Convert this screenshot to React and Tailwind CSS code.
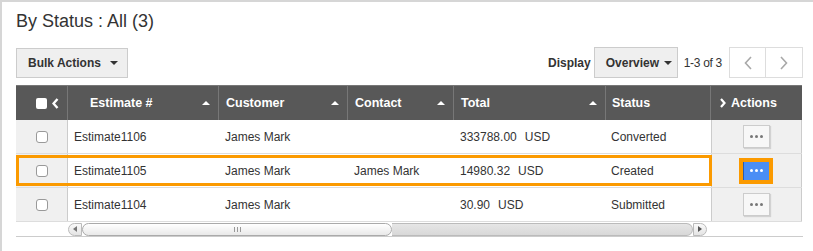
const rows = [
  { id: "Estimate1106", customer: "James Mark", contact: "", total: "333788.00", status: "Converted" },
  { id: "Estimate1105", customer: "James Mark", contact: "James Mark", total: "14980.32", status: "Created", active: true },
  { id: "Estimate1104", customer: "James Mark", contact: "", total: "30.90", status: "Submitted" },
];

function Caret({ className = "" }) {
  return (
    <svg width="8" height="4" viewBox="0 0 8 4" className={className}>
      <polygon points="0,0 8,0 4,4" fill="currentColor" />
    </svg>
  );
}

function SortUp() {
  return (
    <svg width="8" height="4" viewBox="0 0 8 4" className="text-white">
      <polygon points="0,4 8,4 4,0" fill="currentColor" />
    </svg>
  );
}

function HeadCell({ width, label, sort, className = "" }) {
  return (
    <div
      className={`flex items-center justify-between h-full border-r border-[#777] pr-[8px] ${width} ${className}`}
    >
      <span>{label}</span>
      {sort && <SortUp />}
    </div>
  );
}

function Dots({ active }) {
  return (
    <div className={`flex gap-[2px] ${active ? "text-white" : "text-[#777]"}`}>
      <span className="w-[3px] h-[3px] rounded-full bg-current" />
      <span className="w-[3px] h-[3px] rounded-full bg-current" />
      <span className="w-[3px] h-[3px] rounded-full bg-current" />
    </div>
  );
}

export default function App() {
  return (
    <div className="w-[813px] h-[251px] bg-white border-l-2 border-t-2 border-[#d6d6d6] pl-[14px] pr-[10px] pt-[7px] font-['Liberation_Sans',Arial,sans-serif] text-[#333] overflow-hidden">
      <h1 className="text-[18px] leading-[24px] text-[#333]">By Status : All (3)</h1>

      <div className="mt-[14px] flex items-center justify-between h-[31px]">
        <button className="h-[30px] w-[112px] flex items-center gap-[9px] pl-[11px] bg-[#efefef] border border-[#ccc] text-[12px] font-bold text-[#333]">
          Bulk Actions
          <Caret className="text-[#333]" />
        </button>

        <div className="flex items-center h-full">
          <span className="text-[12px] font-bold mr-[3px]">Display</span>
          <button className="h-[31px] w-[84px] flex items-center gap-[5px] pl-[11px] bg-[#efefef] border border-[#ccc] text-[12px] font-bold text-[#333]">
            Overview
            <Caret className="text-[#333]" />
          </button>
          <span className="text-[12px] ml-[6px] mr-[7px] tracking-[-0.3px]">1-3 of 3</span>
          <div className="flex h-[31px] border border-[#ddd] bg-white">
            <div className="w-[36px] flex items-center justify-center border-r border-[#ddd]">
              <svg width="8" height="14" viewBox="0 0 8 14">
                <polyline points="7,1 1.5,7 7,13" fill="none" stroke="#a8a8a8" strokeWidth="1.6" />
              </svg>
            </div>
            <div className="w-[36px] flex items-center justify-center">
              <svg width="8" height="14" viewBox="0 0 8 14">
                <polyline points="1,1 6.5,7 1,13" fill="none" stroke="#a8a8a8" strokeWidth="1.6" />
              </svg>
            </div>
          </div>
        </div>
      </div>

      <div className="mt-[7px] w-[786px]">
        <div className="flex h-[35px] bg-[#585858] border-t border-[#777] text-white text-[12.5px] font-bold">
          <div className="w-[52px] h-full flex items-center justify-end gap-[5px] pr-[8px] border-r border-[#777]">
            <span className="w-[11px] h-[11px] bg-white rounded-[2px]" />
            <svg width="7" height="11" viewBox="0 0 7 11">
              <polyline points="5.5,1 1.5,5.5 5.5,10" fill="none" stroke="white" strokeWidth="2.4" />
            </svg>
          </div>
          <HeadCell width="w-[151px]" label="Estimate #" sort className="pl-[22px]" />
          <HeadCell width="w-[129px]" label="Customer" sort className="pl-[7px]" />
          <HeadCell width="w-[106px]" label="Contact" sort className="pl-[7px]" />
          <HeadCell width="w-[152px]" label="Total" sort className="pl-[7px]" />
          <HeadCell width="w-[105px]" label="Status" className="pl-[6px]" />
          <div className="w-[91px] h-full flex items-center gap-[5px] pl-[9px]">
            <svg width="6" height="10" viewBox="0 0 6 10">
              <polyline points="1,1 4.5,5 1,9" fill="none" stroke="white" strokeWidth="2.2" />
            </svg>
            Actions
          </div>
        </div>

        {rows.map((r) => (
          <div key={r.id} className="relative flex h-[34px] text-[12px] border-b border-[#ddd]">
            <div className="w-[52px] bg-[#f0f0f0] border-r border-[#ccc] flex items-center justify-center">
              <span className="w-[12px] h-[12px] bg-white border border-[#999] rounded-[3px]" />
            </div>
            <div className="w-[151px] bg-white flex items-center pl-[6px]">{r.id}</div>
            <div className="w-[129px] bg-white flex items-center pl-[6px]">{r.customer}</div>
            <div className="w-[106px] bg-white flex items-center pl-[6px]">{r.contact}</div>
            <div className="w-[152px] bg-white flex items-center pl-[6px]">
              {r.total}
              <span className="ml-[8px]">USD</span>
            </div>
            <div className="w-[105px] bg-white flex items-center pl-[5px]">{r.status}</div>
            <div className="w-[91px] bg-[#f0f0f0] border-l border-r border-[#ccc] flex items-center justify-center">
              {r.active ? (
                <div className="border-[4px] border-[#fb9a00] ml-[-2px]">
                  <div className="w-[26px] h-[18px] bg-[#4a8ef5] border-l border-[#2a5cb0] flex items-center justify-center">
                    <Dots active />
                  </div>
                </div>
              ) : (
                <div className="w-[27px] h-[23px] bg-[#f7f7f7] border border-[#ccc] shadow-[1px_1px_1px_rgba(0,0,0,0.12)] flex items-center justify-center">
                  <Dots />
                </div>
              )}
            </div>
            {r.active && (
              <div className="absolute left-0 top-[1px] bottom-[1px] w-[696px] border-[3px] border-[#fb9a00] pointer-events-none" />
            )}
          </div>
        ))}

        <div className="flex h-[15px] border-b border-[#ccc] items-center w-[787px]">
          <div className="ml-[52px] w-[639px] h-[13px] flex items-stretch">
            <div className="w-[14px] border border-[#bbb] rounded-l-[7px] bg-gradient-to-b from-[#fafafa] to-[#e4e4e4] flex items-center justify-center">
              <svg width="4" height="6" viewBox="0 0 4 6">
                <polygon points="4,0 0,3 4,6" fill="#777" />
              </svg>
            </div>
            <div className="w-[310px] border border-[#aaa] rounded-[7px] bg-gradient-to-b from-[#ffffff] to-[#e9e9e9] flex items-center justify-center gap-[2px]">
              <span className="w-px h-[5px] bg-[#999]" />
              <span className="w-px h-[5px] bg-[#999]" />
              <span className="w-px h-[5px] bg-[#999]" />
            </div>
            <div className="flex-1 border-y border-r border-[#bbb] rounded-r-[7px] bg-gradient-to-b from-[#e6e6e6] to-[#d8d8d8]" />
            <div className="w-[14px] border border-[#bbb] rounded-r-[7px] bg-gradient-to-b from-[#fafafa] to-[#e4e4e4] flex items-center justify-center">
              <svg width="4" height="6" viewBox="0 0 4 6">
                <polygon points="0,0 4,3 0,6" fill="#555" />
              </svg>
            </div>
          </div>
        </div>
      </div>
    </div>
  );
}
